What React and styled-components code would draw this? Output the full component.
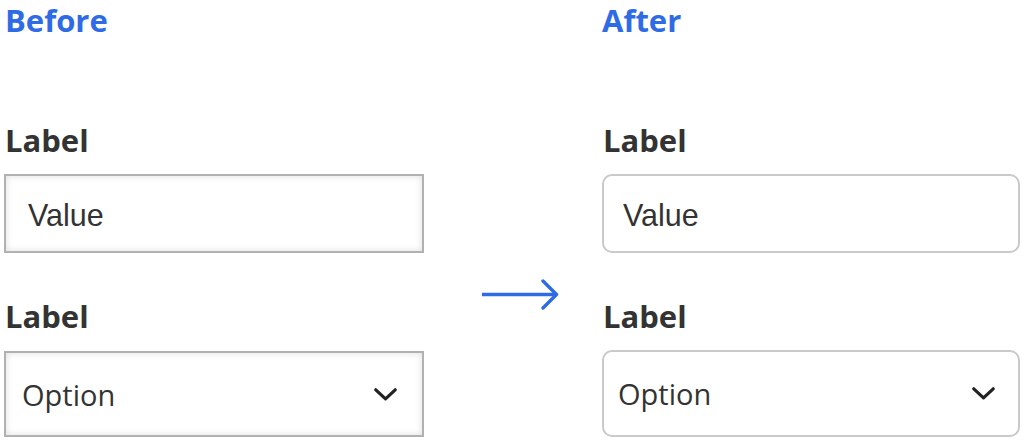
import React from "react";
import styled, { createGlobalStyle, css } from "styled-components";

const GlobalStyle = createGlobalStyle`
  html, body {
    margin: 0;
    padding: 0;
    background: #ffffff;
  }
`;

const Page = styled.div`
  display: grid;
  grid-template-columns: 420px 178px 418px;
  padding-left: 4px;
  width: 1028px;
  height: 448px;
  box-sizing: border-box;
  overflow: hidden;
`;

const Column = styled.div`
  display: flex;
  flex-direction: column;
`;

const Title = styled.h2`
  margin: 0;
  padding-left: ${(p) => p.$indent}px;
  font-family: "Open Sans", sans-serif;
  font-weight: 700;
  font-size: 31px;
  line-height: 40px;
  color: #2f6be5;
`;

const Label = styled.div`
  margin-top: ${(p) => p.$top}px;
  padding-left: 1px;
  font-family: "Open Sans", sans-serif;
  font-weight: 700;
  font-size: 31px;
  line-height: 40px;
  color: #333333;
`;

const boxBase = css`
  box-sizing: border-box;
  display: flex;
  align-items: center;
  justify-content: space-between;
  background: #ffffff;
  ${(p) =>
    p.$modern
      ? css`
          border: 2px solid #c9c9c9;
          border-radius: 10px;
        `
      : css`
          border: 2px solid #b1b1b1;
          border-radius: 0;
          box-shadow: inset 0 0 7px rgba(0, 0, 0, 0.13);
        `}
`;

const InputBox = styled.div`
  ${boxBase}
  margin-top: 14px;
  height: 79px;
  padding: 3px 22px 0 ${(p) => (p.$modern ? 19 : 22)}px;
  font-family: "Liberation Sans", Arial, sans-serif;
  font-size: 30.5px;
  color: #333333;
`;

const SelectBox = styled.div`
  ${boxBase}
  margin-top: ${(p) => (p.$modern ? 14 : 15)}px;
  height: ${(p) => (p.$modern ? 87 : 86)}px;
  padding: 0 ${(p) => (p.$modern ? 23 : 25)}px 0 ${(p) => (p.$modern ? 14 : 16)}px;
  font-family: "Open Sans", sans-serif;
  font-size: 29px;
  color: #333333;
`;

const ArrowColumn = styled.div`
  display: flex;
  justify-content: center;
  padding-top: 279px;
  padding-left: 15px;
`;

const Chevron = () => (
  <svg width="23" height="13" viewBox="0 0 23 13" fill="none">
    <polyline
      points="1.8,1.8 11.5,10.8 21.2,1.8"
      stroke="#222222"
      strokeWidth="3.2"
      strokeLinecap="round"
      strokeLinejoin="round"
    />
  </svg>
);

const Arrow = () => (
  <svg width="77" height="31" viewBox="0 0 77 31" fill="none">
    <line x1="0" y1="15.5" x2="73" y2="15.5" stroke="#2f6be5" strokeWidth="3.4" />
    <polyline
      points="61,2 74.5,15.5 61,29"
      stroke="#2f6be5"
      strokeWidth="3.4"
      strokeLinecap="round"
      strokeLinejoin="round"
    />
  </svg>
);

const FormColumn = ({ title, modern }) => (
  <Column>
    <Title $indent={modern ? 0 : 1}>{title}</Title>
    <Label $top={80}>Label</Label>
    <InputBox $modern={modern}>Value</InputBox>
    <Label $top={43}>Label</Label>
    <SelectBox $modern={modern}>
      Option
      <Chevron />
    </SelectBox>
  </Column>
);

const App = () => (
  <>
    <GlobalStyle />
    <Page>
      <FormColumn title="Before" />
      <ArrowColumn>
        <Arrow />
      </ArrowColumn>
      <FormColumn title="After" modern />
    </Page>
  </>
);

export default App;
